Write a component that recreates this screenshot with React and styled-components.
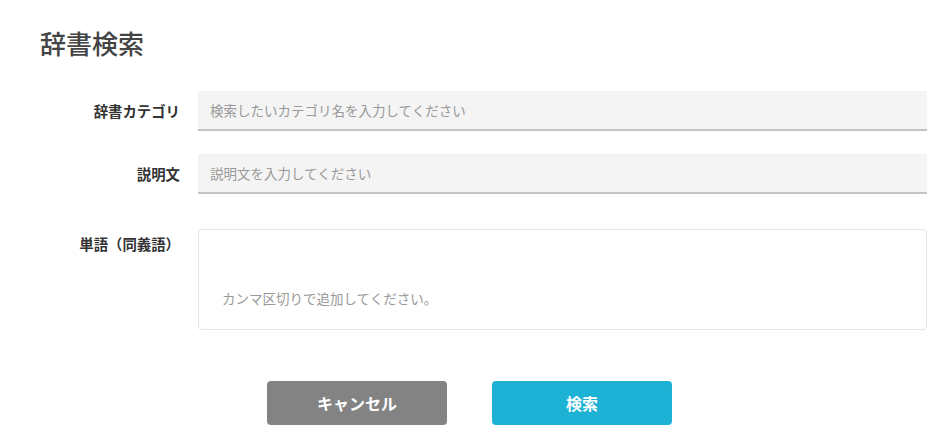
import React from "react";
import styled, { createGlobalStyle } from "styled-components";

const Global = createGlobalStyle`
  html, body { margin: 0; padding: 0; background: #fff; }
  body { font-family: "Noto Sans CJK JP", "Noto Sans", sans-serif; color: #444; }
  * { box-sizing: border-box; }
`;

const Page = styled.div`
  width: 937px;
  padding: 26px 10px 0 0;
`;

const Title = styled.h1`
  margin: 0 0 31px 40px;
  font-size: 26px;
  line-height: 34px;
  font-weight: 500;
  color: #444;
`;

const Form = styled.div`
  display: grid;
  grid-template-columns: 180px 1fr;
  column-gap: 18px;
  row-gap: 23px;
`;

const Label = styled.label`
  font-size: 14.4px;
  font-weight: 700;
  color: #333;
  text-align: right;
  align-self: ${(p) => (p.$top ? "start" : "center")};
  margin-top: ${(p) => (p.$top ? "12px" : "0")};
  padding-top: ${(p) => (p.$top ? "4px" : "0")};
  padding-bottom: ${(p) => (p.$top ? "0" : "2px")};
`;

const TextInput = styled.input`
  height: 40px;
  width: 100%;
  border: none;
  border-bottom: 2px solid #c4c4c4;
  background: #f4f4f4;
  padding: 0 12px;
  font-family: inherit;
  font-size: 13.5px;
  color: #444;
  outline: none;
  &::placeholder { color: #999; }
`;

const TagBox = styled.div`
  margin-top: 12px;
  height: 101px;
  border: 1px solid #e6e6e6;
  border-radius: 4px;
  display: flex;
  align-items: flex-end;
  padding: 0 23px 21px;
`;

const TagInput = styled.input`
  border: none;
  outline: none;
  width: 100%;
  font-family: inherit;
  font-size: 13.5px;
  color: #444;
  padding: 0;
  background: transparent;
  &::placeholder { color: #999; }
`;

const Actions = styled.div`
  display: flex;
  justify-content: center;
  gap: 45px;
  margin-top: 51px;
  padding-left: 12px;
`;

const Button = styled.button`
  width: 180px;
  height: 44px;
  border: none;
  border-radius: 4px;
  background: ${(p) => (p.$primary ? "#1eb1d6" : "#838383")};
  color: #fff;
  font-family: inherit;
  font-size: 16px;
  font-weight: 700;
  cursor: pointer;
`;

export default function App() {
  return (
    <>
      <Global />
      <Page>
        <Title>辞書検索</Title>
        <Form>
          <Label>辞書カテゴリ</Label>
          <TextInput placeholder="検索したいカテゴリ名を入力してください" />
          <Label>説明文</Label>
          <TextInput placeholder="説明文を入力してください" />
          <Label $top>単語（同義語）</Label>
          <TagBox>
            <TagInput placeholder="カンマ区切りで追加してください。" />
          </TagBox>
        </Form>
        <Actions>
          <Button>キャンセル</Button>
          <Button $primary>検索</Button>
        </Actions>
      </Page>
    </>
  );
}
